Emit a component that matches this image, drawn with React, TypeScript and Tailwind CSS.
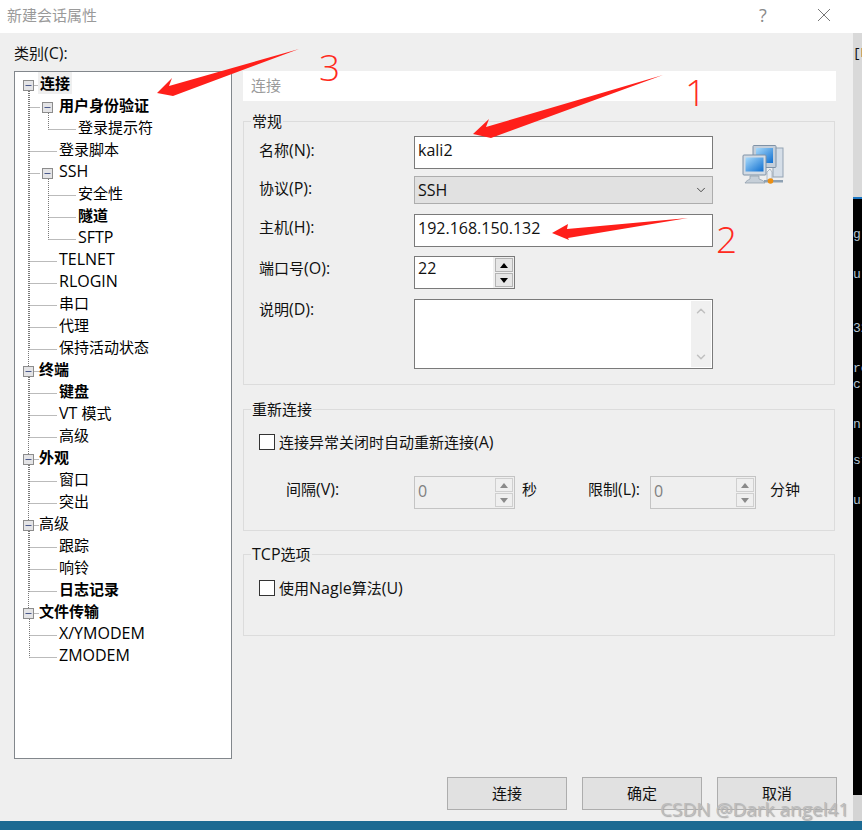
import { ChevronDown, ChevronUp } from "lucide-react";

type Node = { label: string; level: number; bold?: boolean; open?: boolean };

const TREE: Node[] = [
  { label: "连接", level: 0, bold: true, open: true },
  { label: "用户身份验证", level: 1, bold: true, open: true },
  { label: "登录提示符", level: 2 },
  { label: "登录脚本", level: 1 },
  { label: "SSH", level: 1, open: true },
  { label: "安全性", level: 2 },
  { label: "隧道", level: 2, bold: true },
  { label: "SFTP", level: 2 },
  { label: "TELNET", level: 1 },
  { label: "RLOGIN", level: 1 },
  { label: "串口", level: 1 },
  { label: "代理", level: 1 },
  { label: "保持活动状态", level: 1 },
  { label: "终端", level: 0, bold: true, open: true },
  { label: "键盘", level: 1, bold: true },
  { label: "VT 模式", level: 1 },
  { label: "高级", level: 1 },
  { label: "外观", level: 0, bold: true, open: true },
  { label: "窗口", level: 1 },
  { label: "突出", level: 1 },
  { label: "高级", level: 0, open: true },
  { label: "跟踪", level: 1 },
  { label: "响铃", level: 1 },
  { label: "日志记录", level: 1, bold: true },
  { label: "文件传输", level: 0, bold: true, open: true },
  { label: "X/YMODEM", level: 1 },
  { label: "ZMODEM", level: 1 },
];

const LEVEL_PAD = ["pl-[24px]", "pl-[44px]", "pl-[63px]"];
const GUIDE_X = [14, 33, 52];

// latin runs sit a size above the CJK ones in the original dialog font
function Mixed({ text }: { text: string }) {
  const parts = text.split(/([\x20-\x7e]+)/).filter(Boolean);
  return (
    <>
      {parts.map((p, i) =>
        /^[\x20-\x7e]+$/.test(p) ? (
          <span key={i} className="text-[16px]">{p}</span>
        ) : (
          <span key={i}>{p}</span>
        )
      )}
    </>
  );
}

// dotted connectors and +/- boxes of the tree
function TreeLines() {
  const rowY = (i: number) => 13 + 22 * i;
  const parts: React.ReactNode[] = [];
  TREE.forEach((n, i) => {
    const y = rowY(i) + 0.5;
    const x = GUIDE_X[n.level];
    if (n.level > 0) {
      let prev = i - 1;
      while (TREE[prev].level > n.level) prev--;
      parts.push(<line key={`v${i}`} x1={x - 18.5} x2={x - 18.5} y1={rowY(prev)} y2={y} stroke="#777" strokeDasharray="1 1" />);
      parts.push(<line key={`h${i}`} x1={x - 18.5} x2={x + (n.open ? -8 : 9)} y1={y} y2={y} stroke="#777" strokeDasharray="1 1" />);
    }
    if (n.level === 0) {
      let prev = i - 1;
      while (prev >= 0 && TREE[prev].level > 0) prev--;
      if (prev >= 0) parts.push(<line key={`v${i}`} x1={13.5} x2={13.5} y1={rowY(prev)} y2={y} stroke="#777" strokeDasharray="1 1" />);
      parts.push(<line key={`h${i}`} x1={13.5} x2={24} y1={y} y2={y} stroke="#777" strokeDasharray="1 1" />);
    }
  });
  TREE.forEach((n, i) => {
    if (!n.open) return;
    const cx = n.level === 0 ? 13.5 : 32.5;
    const y = rowY(i) + 0.5;
    parts.push(
      <g key={`b${i}`}>
        <rect x={cx - 5} y={y - 5} width={10} height={10} fill="#e4e4e6" stroke="#8c8c8c" />
        <line x1={cx - 3} x2={cx + 3} y1={y} y2={y} stroke="#4b5a8c" />
      </g>
    );
  });
  return (
    <svg className="absolute left-0 top-0" width={216} height={660}>
      {parts}
    </svg>
  );
}

function Group({ title, className, children }: { title: string; className: string; children: React.ReactNode }) {
  return (
    <fieldset className={`border border-[#dcdcdc] pl-[15px] pr-[15px] m-0 ${className}`}>
      <legend className="-ml-[8px] px-[1px] text-[15px] leading-[20px] text-[#111]"><Mixed text={title} /></legend>
      {children}
    </fieldset>
  );
}

function Arrow({ dir, disabled }: { dir: "up" | "down"; disabled?: boolean }) {
  const fill = disabled ? "#8a8a8a" : "#000";
  return (
    <div className={`h-[14px] w-[18px] flex items-center justify-center border ${disabled ? "border-[#cfcfcf] bg-[#efefef]" : "border-[#b4b4b4] bg-[#e6e6e6]"}`}>
      <svg width="8" height="5">
        <polygon points={dir === "up" ? "4,0 8,5 0,5" : "0,0 8,0 4,5"} fill={fill} />
      </svg>
    </div>
  );
}

function Spin({ value, disabled, width }: { value: string; disabled?: boolean; width: string }) {
  return (
    <div className={`h-[33px] flex border ${width} ${disabled ? "border-[#c4c4c4]" : "border-[#7a7a7a]"}`}>
      <div className={`flex-1 pl-[3px] text-[16px] ${disabled ? "leading-[29px] bg-[#efefef] text-[#808080]" : "leading-[23px] bg-white text-[#111]"}`}>{value}</div>
      <div className={`w-[21px] flex flex-col items-center justify-center gap-[1px] ${disabled ? "bg-[#efefef]" : "bg-[#f0f0f0]"}`}>
        <Arrow dir="up" disabled={disabled} />
        <Arrow dir="down" disabled={disabled} />
      </div>
    </div>
  );
}

function Check({ label }: { label: string }) {
  return (
    <div className="flex items-center gap-[4px]">
      <div className="w-[16px] h-[16px] bg-white border border-[#333]" />
      <span className="text-[15px] text-[#111] leading-[20px]"><Mixed text={label} /></span>
    </div>
  );
}

function Label({ text, className }: { text: string; className: string }) {
  return (
    <span className={`text-[#111] leading-[20px] ${className}`}><Mixed text={text} /></span>
  );
}

function Btn({ label }: { label: string }) {
  return (
    <button className="w-[120px] h-[33px] bg-[#e1e1e1] border border-[#adadad] text-[15px] text-[#111]">{label}</button>
  );
}

function NetworkIcon() {
  return (
    <svg width="42" height="42" viewBox="0 0 42 42">
      <defs>
        <linearGradient id="scr" x1="0" y1="0" x2="1" y2="1">
          <stop offset="0" stopColor="#a8dafb" />
          <stop offset="1" stopColor="#0f6fd0" />
        </linearGradient>
      </defs>
      <rect x="31" y="3" width="10" height="29" fill="#d5dee8" stroke="#93a3b4" />
      <rect x="11" y="0.5" width="23" height="22" rx="1" fill="#c4cfdb" stroke="#7f92a6" />
      <rect x="14" y="3" width="17" height="15" fill="url(#scr)" />
      <rect x="1" y="10" width="23" height="20" rx="1" fill="#d3dbe4" stroke="#7f92a6" />
      <rect x="3.5" y="12.5" width="18" height="14" fill="url(#scr)" />
      <path d="M8 31h9v3c3 1 5 2 6 4H3c1-2 3-3 5-4z" fill="#c6cfd8" stroke="#8a98a8" strokeWidth="0.7" />
      <rect x="22" y="35" width="19" height="2.5" fill="#8ea1b3" />
      <path d="M25 27l3-3 2 3v8h-5z" fill="#e8edf2" stroke="#8a98a8" strokeWidth="0.6" />
      <circle cx="28.5" cy="36" r="2.8" fill="#ec8f12" />
    </svg>
  );
}

function Annotations() {
  return (
    <div className="absolute inset-0 pointer-events-none">
      <svg className="absolute left-0 top-0" width="862" height="830">
        <polygon points="157,93 172,78 169,86 299,49 173,96" fill="#ff1f1a" />
        <polygon points="473,134 489,119 486,127 663,75 491,138" fill="#ff1f1a" />
        <polygon points="552,233 568,224 567,229 688,218 568,238 569,240" fill="#ff1f1a" />
      </svg>
      <span className="absolute left-[319px] top-[46px] text-[37px] leading-[42px] text-[#ff2a20] font-['Open_Sans',sans-serif] font-light">3</span>
      <span className="absolute left-[685px] top-[71px] text-[37px] leading-[42px] text-[#ff2a20] font-['Open_Sans',sans-serif] font-light">1</span>
      <span className="absolute left-[716px] top-[218px] text-[37px] leading-[42px] text-[#ff2a20] font-['Open_Sans',sans-serif] font-light">2</span>
      <span className="absolute left-[660px] top-[795px] text-[19px] leading-[28px] text-[#bcbcbc] [text-shadow:1px_1px_1px_#aaa] font-['Open_Sans',sans-serif]">CSDN @Dark angel41</span>
    </div>
  );
}

export default function App() {
  return (
    <div className="relative w-[862px] h-[830px] overflow-hidden bg-[#1c6a92] font-['Open_Sans','Noto_Sans_CJK_SC',sans-serif] text-[15px]">
      <div className="flex h-[821px]">
        {/* dialog */}
        <div className="w-[853px] h-full bg-[#efefef] flex flex-col">
          <div className="h-[33px] bg-white flex items-center pl-[7px] pb-[3px] text-[#9a9a9a]">
            <span className="flex-1">新建会话属性</span>
            <span className="w-[58px] text-[18px] text-[#8a8a8a]">?</span>
            <svg className="mr-[22px]" width="14" height="14">
              <path d="M1 1l12 12M13 1L1 13" stroke="#777" fill="none" />
            </svg>
          </div>

          <div className="flex-1 flex pl-[14px] pt-[10px]">
            {/* left tree */}
            <div className="w-[218px] flex flex-col">
              <div className="h-[20px] text-[15px] leading-[20px] text-[#111] mb-[8px]"><Mixed text="类别(C):" /></div>
              <div className="relative h-[688px] bg-white border border-[#82878c]">
                <TreeLines />
                <div className="relative">
                  {TREE.map((n, i) => (
                    <div key={i} className={`h-[22px] flex items-center ${LEVEL_PAD[n.level]}`}>
                      <span className={`leading-[22px] text-[#000] ${n.bold ? "font-bold" : ""} ${i === 0 ? "bg-[#efefef] px-[2px] -ml-[1px]" : ""}`}><Mixed text={n.label} /></span>
                    </div>
                  ))}
                </div>
              </div>
            </div>

            {/* right pane */}
            <div className="ml-[11px] w-[593px] flex flex-col pt-[28px]">
              <div className="h-[30px] bg-white pl-[8px] leading-[28px] text-[#9a9a9a]">连接</div>

              <Group title="常规" className="mt-[10px] h-[274px] mr-[1px]">
                <div className="relative">
                  <div className="flex items-center h-[33px] mt-[5px]">
                    <Label text="名称(N):" className="w-[155px] pb-[5px]" />
                    <div className="w-[299px] h-[33px] bg-white border border-[#7a7a7a] pl-[3px] text-[16px] leading-[26px] text-[#111]">kali2</div>
                    <div className="ml-[29px] mt-[27px]"><NetworkIcon /></div>
                  </div>
                  <div className="flex items-center h-[28px] mt-[7px]">
                    <Label text="协议(P):" className="w-[155px] pb-[5px]" />
                    <div className="w-[299px] h-[28px] bg-[#e1e1e1] border border-[#adadad] pl-[3px] pr-[4px] flex items-center justify-between text-[16px] text-[#111]">
                      SSH
                      <ChevronDown size={14} strokeWidth={1.5} className="text-[#333]" />
                    </div>
                  </div>
                  <div className="flex items-center h-[33px] mt-[10px]">
                    <Label text="主机(H):" className="w-[155px] pb-[7px]" />
                    <div className="w-[299px] h-[33px] bg-white border border-[#7a7a7a] pl-[3px] text-[16px] leading-[26px] text-[#111]">192.168.150.132</div>
                  </div>
                  <div className="flex items-center h-[33px] mt-[9px]">
                    <Label text="端口号(O):" className="w-[155px] pb-[10px]" />
                    <Spin value="22" width="w-[101px]" />
                  </div>
                  <div className="flex items-start mt-[10px]">
                    <Label text="说明(D):" className="w-[155px]" />
                    <div className="w-[299px] h-[70px] bg-white border border-[#7a7a7a] flex justify-end p-[1px]">
                      <div className="w-[20px] h-full bg-[#f0f0f0] flex flex-col items-center justify-between py-[3px] text-[#c0c0c0]">
                        <ChevronUp size={14} strokeWidth={2.5} />
                        <ChevronDown size={14} strokeWidth={2.5} />
                      </div>
                    </div>
                  </div>
                </div>
              </Group>

              <Group title="重新连接" className="mt-[14px] h-[132px] mr-[1px]">
                <div className="mt-[13px]"><Check label="连接异常关闭时自动重新连接(A)" /></div>
                <div className="flex items-center mt-[24px] pl-[27px]">
                  <Label text="间隔(V):" className="w-[128px] pb-[8px]" />
                  <Spin value="0" disabled width="w-[101px]" />
                  <Label text="秒" className="ml-[7px] w-[66px] pb-[8px]" />
                  <Label text="限制(L):" className="w-[62px] pb-[8px]" />
                  <Spin value="0" disabled width="w-[106px]" />
                  <Label text="分钟" className="ml-[14px] pb-[8px]" />
                </div>
              </Group>

              <Group title="TCP选项" className="mt-[13px] h-[92px] mr-[1px]">
                <div className="mt-[14px]"><Check label="使用Nagle算法(U)" /></div>
              </Group>

              <div className="mt-[141px] flex justify-end gap-[15px] -mr-[1px]">
                <Btn label="连接" />
                <Btn label="确定" />
                <Btn label="取消" />
              </div>
            </div>
          </div>
        </div>

        {/* window behind the dialog */}
        <div className="w-[9px] h-full flex flex-col font-['Liberation_Mono',monospace] text-[13px]">
          <div className="h-[33px] bg-white" />
          <div className="h-[164px] bg-[#d9d9d9] overflow-hidden text-[#111] leading-[20px] pt-[11px] whitespace-nowrap">[H</div>
          <div className="h-[2px] bg-[#1a76c4]" />
          <div className="flex-1 bg-black text-[#b5c4d2] overflow-hidden whitespace-nowrap">
            <div className="mt-[26px] h-[40px]">g</div>
            <div className="h-[54px]">u</div>
            <div className="h-[40px]">32</div>
            <div className="h-[16px]">re</div>
            <div className="h-[40px]">c</div>
            <div className="h-[36px]">n</div>
            <div className="h-[40px]">st</div>
            <div>u</div>
          </div>
          <div className="h-[26px] bg-[#d4d4d4]" />
        </div>
      </div>
      <Annotations />
    </div>
  );
}
